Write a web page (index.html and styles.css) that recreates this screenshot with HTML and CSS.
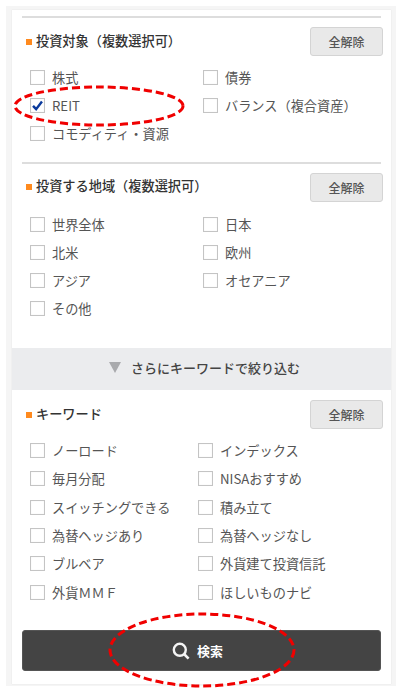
FILE: index.html
```html
<!DOCTYPE html>
<html lang="ja">
<head>
<meta charset="utf-8">
<title>検索</title>
<link rel="stylesheet" href="styles.css">
</head>
<body>
<div class="frame">
  <form class="card">
    <section class="group">
      <div class="head"><h2 class="title">投資対象（複数選択可）</h2><button type="button" class="clear">全解除</button></div>
      <div class="opts">
        <label class="opt"><span class="box"></span>株式</label>
        <label class="opt"><span class="box"></span>債券</label>
        <label class="opt"><span class="box"><svg class="tick" viewBox="0 0 16 16"><path d="M2.5 8.5 6.3 12.5 13.5 3.2" fill="none" stroke="#0b3a9c" stroke-width="3"/></svg></span>REIT</label>
        <label class="opt"><span class="box"></span>バランス（複合資産）</label>
        <label class="opt"><span class="box"></span>コモディティ・資源</label>
      </div>
    </section>
    <section class="group second">
      <div class="head"><h2 class="title">投資する地域（複数選択可）</h2><button type="button" class="clear">全解除</button></div>
      <div class="opts">
        <label class="opt"><span class="box"></span>世界全体</label>
        <label class="opt"><span class="box"></span>日本</label>
        <label class="opt"><span class="box"></span>北米</label>
        <label class="opt"><span class="box"></span>欧州</label>
        <label class="opt"><span class="box"></span>アジア</label>
        <label class="opt"><span class="box"></span>オセアニア</label>
        <label class="opt"><span class="box"></span>その他</label>
      </div>
    </section>
    <div class="band"><span class="tri"></span>さらにキーワードで絞り込む</div>
    <section class="keywords">
      <div class="head"><h2 class="title">キーワード</h2><button type="button" class="clear">全解除</button></div>
      <div class="opts kw">
        <label class="opt"><span class="box"></span>ノーロード</label>
        <label class="opt"><span class="box"></span>インデックス</label>
        <label class="opt"><span class="box"></span>毎月分配</label>
        <label class="opt"><span class="box"></span>NISAおすすめ</label>
        <label class="opt"><span class="box"></span>スイッチングできる</label>
        <label class="opt"><span class="box"></span>積み立て</label>
        <label class="opt"><span class="box"></span>為替ヘッジあり</label>
        <label class="opt"><span class="box"></span>為替ヘッジなし</label>
        <label class="opt"><span class="box"></span>ブルベア</label>
        <label class="opt"><span class="box"></span>外貨建て投資信託</label>
        <label class="opt"><span class="box"></span>外貨ＭＭＦ</label>
        <label class="opt"><span class="box"></span>ほしいものナビ</label>
      </div>
    </section>
    <button type="button" class="search">
      <svg class="glass" viewBox="0 0 18 18"><circle cx="7.8" cy="7.8" r="6" fill="none" stroke="#f4f4f4" stroke-width="2.4"/><path d="M12 12 16.6 16.6" stroke="#f4f4f4" stroke-width="2.6"/></svg>
      検索
    </button>
  </form>
</div>
<svg class="mark mark-a" viewBox="0 0 172 42"><ellipse cx="86" cy="21" rx="84" ry="19" fill="none" stroke="#f00000" stroke-width="3" stroke-dasharray="8 4"/></svg>
<svg class="mark mark-b" viewBox="0 0 188 76"><ellipse cx="94" cy="38" rx="92" ry="36" fill="none" stroke="#f00000" stroke-width="3" stroke-dasharray="8 4"/></svg>
</body>
</html>
```
FILE: styles.css
```css
* { box-sizing: border-box; }
html, body { margin: 0; padding: 0; background: #fff; }
body {
  position: relative;
  width: 401px;
  height: 694px;
  overflow: hidden;
  font-family: "Noto Sans CJK JP", "Liberation Sans", sans-serif;
  font-size: 13.2px;
  color: #555;
}
.frame {
  margin: 6px 5px 0 6px;
  padding: 4px 5px 2px 6px;
  background: #f5f5f5;
}
.card {
  display: block;
  height: 674px;
  padding: 6px 10px 0;
  background: #fff;
  box-shadow: 0 0 1px #ddd;
}
.group {
  border-top: 2px solid #ddd;
  padding-top: 9px;
}
.second { margin-top: 14px; }
.head {
  display: flex;
  align-items: center;
  justify-content: space-between;
  margin-right: -2px;
  height: 29px;
}
.title {
  margin: 0 0 2px;
  padding-left: 14px;
  position: relative;
  font-size: 13.2px;
  font-weight: 500;
  color: #333;
  line-height: 20px;
}
.title::before {
  content: "";
  position: absolute;
  left: 4px;
  top: 8px;
  width: 6px;
  height: 6px;
  background: #ff8a1e;
}
.clear {
  width: 73px;
  height: 29px;
  padding: 0;
  border: 1px solid #d4d4d4;
  border-radius: 3px;
  background: #e9e9e9;
  font: 500 12px "Noto Sans CJK JP", sans-serif;
  color: #555;
}
.opts {
  display: grid;
  grid-template-columns: 173px 1fr;
  grid-auto-rows: 28.3px;
  margin-top: 7px;
  padding-left: 8px;
}
.second .opts { margin-top: 8px; }
.kw {
  grid-template-columns: 168px 1fr;
  margin-top: 7px;
  grid-auto-rows: 28.4px;
}
.opt {
  display: flex;
  align-items: center;
  gap: 7px;
  white-space: nowrap;
}
.box {
  display: block;
  flex: none;
  width: 15px;
  height: 15px;
  border: 1px solid #c4c4c4;
  box-shadow: inset 0 0 1px #ddd;
  background: #fff;
}
.tick { display: block; width: 13px; height: 13px; }
.band {
  display: flex;
  align-items: center;
  justify-content: center;
  gap: 10px;
  height: 42px;
  margin: 25px -10px 0;
  padding: 0 0 3px 6px;
  background: #ebecee;
  font-size: 13px;
  font-weight: 500;
  color: #444;
}
.tri {
  width: 0;
  height: 0;
  border-left: 6px solid transparent;
  border-right: 6px solid transparent;
  border-top: 11px solid #a9aaad;
}
.keywords { padding-top: 10px; }
.search {
  display: flex;
  align-items: center;
  justify-content: center;
  gap: 7px;
  width: 359px;
  height: 41px;
  margin-top: 24px;
  padding: 0 8px 0 0;
  border: 1px solid #555;
  border-radius: 3px;
  background: #444;
  color: #fff;
  font: 700 13px "Noto Sans CJK JP", sans-serif;
}
.glass { width: 18px; height: 18px; }
.mark { position: absolute; }
.mark-a { left: 13px; top: 85px; width: 172px; height: 42px; }
.mark-b { left: 108px; top: 612px; width: 188px; height: 76px; }
```
